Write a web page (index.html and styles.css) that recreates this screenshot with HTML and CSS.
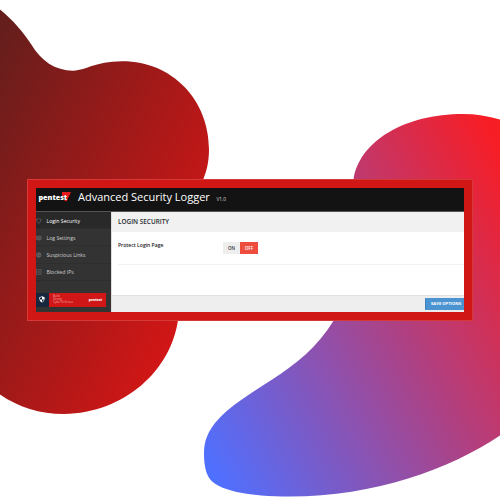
FILE: index.html
```html
<!DOCTYPE html>
<html lang="en">
<head>
<meta charset="utf-8">
<title>Advanced Security Logger</title>
<link rel="stylesheet" href="styles.css">
</head>
<body>
<svg class="backdrop" viewBox="0 0 500 500" aria-hidden="true">
  <defs>
    <linearGradient id="red" gradientUnits="userSpaceOnUse" x1="0" y1="40" x2="253" y2="161"><stop offset="0" stop-color="#661e1c"/><stop offset="1" stop-color="#d01616"/></linearGradient>
    <linearGradient id="blue" gradientUnits="userSpaceOnUse" x1="210" y1="470" x2="568" y2="268"><stop offset="0" stop-color="#4f70ff"/><stop offset="1" stop-color="#f71d25"/></linearGradient>
  </defs>
  <path fill="url(#red)" d="M0 9.500C13 20 23 32 31 44C41 61 55 70.500 73 70.700C88 70 94 61.500 122 61.300C172 61 209 100 209 149C209 164 206 172 203 180C190 220 180 270 178 320C171 370 125 413 64 414C40 414 18 407 0 394.500Z"/>
  <path fill="url(#blue)" d="M500 119.500C488 116 476 114 463 114C405 114 359 141 353.500 180C350 230 355 288 334 320C301 375 244 388 215 423C205 436 204 445 204 454C204 461 205 470 208 476C215 491 250 496.500 290 496.500C375 496.500 450 469 500 435.500Z"/>
</svg>
<main class="frame">
  <div class="app">
    <header class="top">
      <div class="brand"><svg viewBox="0 0 9 10"><path d="M0 0H9L4.500 9.500L2.200 8.500L4 4.500H0Z" fill="#e51b1b"/></svg><span>pentest</span></div>
      <h1>Advanced Security Logger</h1>
      <small>V1.0</small>
    </header>
    <div class="body">
      <nav class="side">
        <a class="active"><svg viewBox="0 0 6 6"><path d="M.5 1Q2 1 3 .5Q4 1 5.500 1Q5.500 4.500 3 5.500Q.5 4.500 .5 1Z"/></svg>Login Security</a>
        <a><svg viewBox="0 0 6 6"><path d="M.5 1H5.500V4.500H.5ZM1 2.200H5M1 3.300H5M2 5.300H4"/></svg>Log Settings</a>
        <a><svg viewBox="0 0 6 6"><path d="M3 .5A2.500 2.500 0 1 1 3 5.500A2.500 2.500 0 1 1 3 .5M.5 3H5.500M3 .5V5.500M1 1.600H5M1 4.400H5"/></svg>Suspicious Links</a>
        <a><svg viewBox="0 0 6 6"><path d="M.5 .5H5.500V5.500H.5ZM2 2L4 4M4 2L2 4"/></svg>Blocked IPs</a>
        <div class="promo">
          <div class="shield"><svg viewBox="0 0 6 7"><path d="M3 .3L5.700 1.200Q5.900 4.900 3 6.600Q.1 4.900 .3 1.200Z" fill="#fff"/><path d="M3 1V3.400H1Q1 2.300 1 1.700ZM3 3.400H5Q4.600 5 3 5.900Z" fill="#17273d"/></svg></div>
          <div class="banner"><p>Build<br>Strong<br>Cyber Defenses</p><b>pentest</b></div>
        </div>
      </nav>
      <section class="content">
        <h2>LOGIN SECURITY</h2>
        <div class="row"><span class="label">Protect Login Page</span><span class="switch"><i>ON</i><i class="off">OFF</i></span></div>
        <footer><button>SAVE OPTIONS</button></footer>
      </section>
    </div>
  </div>
</main>
</body>
</html>
```
FILE: styles.css
```css
* { box-sizing: border-box; }
body { margin: 0; width: 500px; height: 500px; overflow: hidden; background: #fff; font-family: "Open Sans", sans-serif; }
.backdrop { position: absolute; inset: 0; width: 500px; height: 500px; }
.frame { position: relative; width: 446px; height: 142px; margin: 179px 0 0 27px; padding: 8px; border: 1px solid #d63a38; background: #d01716; }
.app { width: 428px; height: 124px; overflow: hidden; background: #fff; }
.top { display: flex; height: 23px; background: #131313; color: #fff; white-space: nowrap; }
.brand { position: relative; width: 42px; padding-left: 2.500px; font: 800 7.200px/18px "Open Sans", sans-serif; }
.brand span { position: relative; }
.brand svg { position: absolute; left: 26px; top: 4px; width: 9px; height: 10px; }
h1 { width: 132px; margin: 0; font-size: 11px; font-weight: 400; line-height: 18px; }
small { margin-left: 6.500px; font-size: 4.800px; line-height: 22px; color: #ddd; }
.body { display: flex; height: 101px; border-top: 1px solid #555; }
.side { display: flex; flex-direction: column; width: 75px; background: #333; }
.side a { display: flex; align-items: center; gap: 5px; height: 17.200px; padding-top: 1px; border-bottom: 1px solid #2e2e2e; color: #d0d0d0; font-size: 5.150px; font-weight: 500; white-space: nowrap; }
.side a.active { background: #292929; color: #fff; }
.side a svg { width: 5.500px; height: 6px; fill: none; stroke: #777; stroke-width: .6; }
.promo { display: flex; height: 14px; margin-top: 12px; }
.shield { display: grid; place-items: center; width: 13px; padding-right: 2px; background: #17273d; }
.shield svg { width: 6px; height: 7px; }
.banner { display: flex; align-items: center; justify-content: space-between; width: 57px; padding: 0 4px; background: #d01616; color: #fff; }
.banner p { margin: 0; font-size: 2.800px; line-height: 3px; color: #f5a9a9; }
.banner b { font-size: 3.300px; font-weight: 800; }
.content { display: flex; flex: 1; flex-direction: column; border-left: 1px solid #ddd; }
h2 { height: 20px; margin: 0; padding-left: 6px; background: #f1f1f1; color: #252b30; font-size: 6.400px; font-weight: 600; line-height: 20px; }
.row { display: flex; height: 33px; margin: 0 0 0 6px; border-bottom: 1px solid #f3f3f3; color: #222; }
.label { width: 105px; font-size: 5.050px; line-height: 27px; font-weight: 600; }
.switch { display: flex; height: 12px; margin-top: 10px; }
.switch i { width: 17px; background: #eee; color: #333; font: 600 4.500px/12px "Open Sans", sans-serif; text-align: center; }
.switch .off { width: 18px; background: #ef4c40; color: #fff; }
footer { display: flex; justify-content: flex-end; height: 17px; margin-top: auto; padding-top: 2px; border-top: 1px solid #e2e2e2; background: #eee; }
button { width: 39px; height: 12px; padding: 0 0 0 2px; border: 0; border-left: 1px solid #3d82be; border-radius: 1px 0 0 1px; background: #4b93d1; color: #fff; font: 700 4.150px/12px "Open Sans", sans-serif; white-space: nowrap; }
```
